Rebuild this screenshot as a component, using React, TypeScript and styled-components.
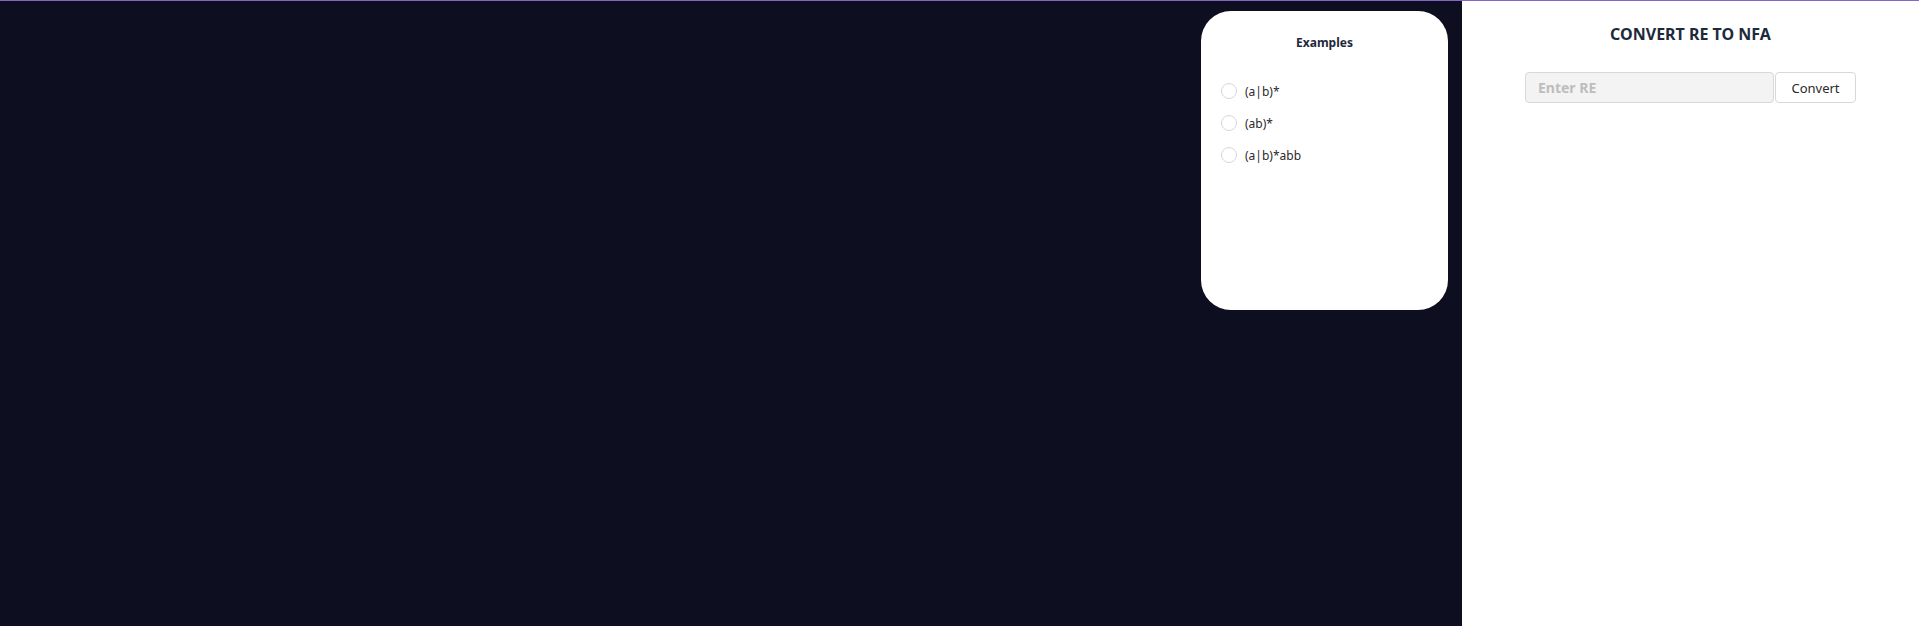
import React from "react";
import styled, { createGlobalStyle } from "styled-components";

const Global = createGlobalStyle`
  html, body { margin: 0; padding: 0; }
  body { font-family: "Noto Sans", "Open Sans", sans-serif; background: #0d0f20; }
  * { box-sizing: border-box; }
`;

const Page = styled.div`
  display: flex;
  height: 626px;
  border-top: 1px solid #8467c4;
  overflow: hidden;
`;

const Stage = styled.div`
  flex: 1;
  background: #0d0f20;
  display: flex;
  justify-content: flex-end;
  align-items: flex-start;
  padding: 10px 14px 0 0;
`;

const Card = styled.div`
  width: 247px;
  height: 299px;
  background: #ffffff;
  border-radius: 30px;
  padding: 24px 0 0 20px;
  display: flex;
  flex-direction: column;
`;

const CardTitle = styled.h3`
  margin: 0 20px 0 0;
  font-size: 12px;
  line-height: 16px;
  font-weight: 700;
  text-align: center;
  color: #1e293b;
`;

const OptionList = styled.div`
  display: flex;
  flex-direction: column;
  gap: 16px;
  margin-top: 32px;
`;

const Option = styled.label`
  display: flex;
  align-items: center;
  gap: 8px;
  height: 16px;
  font-size: 12px;
  color: #2a2a2a;
  cursor: pointer;
`;

const RadioCircle = styled.span`
  width: 16px;
  height: 16px;
  border-radius: 50%;
  border: 1px solid #d9d9d9;
  background: #fff;
  flex-shrink: 0;
`;

const Panel = styled.div`
  width: 457px;
  background: #ffffff;
  display: flex;
  flex-direction: column;
  align-items: center;
  padding-top: 23px;
`;

const PanelTitle = styled.h2`
  margin: 0;
  font-size: 16px;
  line-height: 20px;
  font-weight: 700;
  color: #1e2a3b;
`;

const Form = styled.div`
  display: flex;
  gap: 1px;
  margin-top: 28px;
`;

const Input = styled.input`
  width: 249px;
  height: 31px;
  background: #f3f3f3;
  border: 1px solid #d8d8d8;
  border-radius: 4px;
  padding: 0 12px;
  font-family: inherit;
  font-size: 14px;
  font-weight: 700;
  color: #333;
  outline: none;
  &::placeholder {
    color: #bdbdbd;
    font-weight: 700;
  }
`;

const Button = styled.button`
  width: 81px;
  height: 31px;
  background: #fff;
  border: 1px solid #d8d8d8;
  border-radius: 4px;
  font-family: inherit;
  font-size: 13px;
  color: #2a2a2a;
  cursor: pointer;
`;

const examples = ["(a|b)*", "(ab)*", "(a|b)*abb"];

export default function App() {
  return (
    <>
      <Global />
      <Page>
        <Stage>
          <Card>
            <CardTitle>Examples</CardTitle>
            <OptionList>
              {examples.map((ex) => (
                <Option key={ex}>
                  <RadioCircle />
                  {ex}
                </Option>
              ))}
            </OptionList>
          </Card>
        </Stage>
        <Panel>
          <PanelTitle>CONVERT RE TO NFA</PanelTitle>
          <Form>
            <Input placeholder="Enter RE" />
            <Button>Convert</Button>
          </Form>
        </Panel>
      </Page>
    </>
  );
}
